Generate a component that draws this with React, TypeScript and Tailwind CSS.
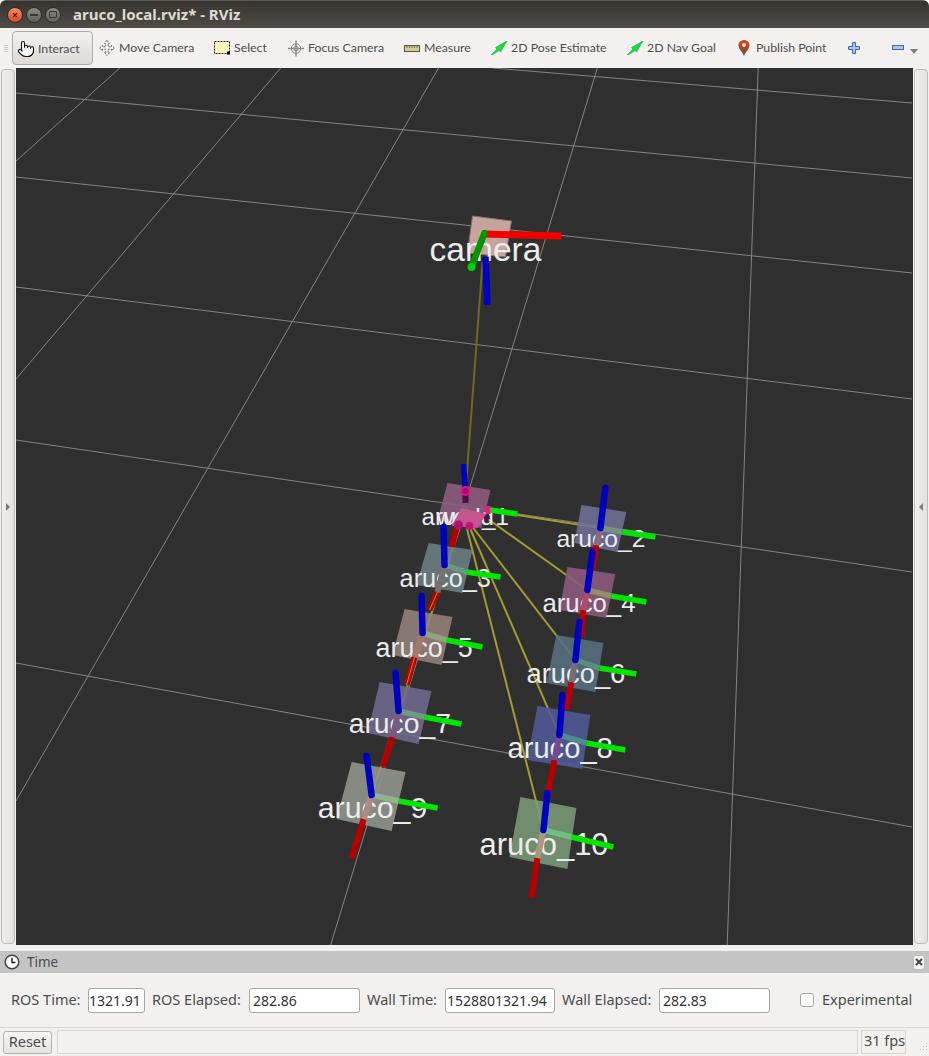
import { Pointer } from 'lucide-react';

const horizontal = [
  [493, 68, 913, 103],
  [16, 93, 913, 178],
  [16, 177, 913, 273],
  [16, 287, 913, 399],
  [16, 440, 913, 572],
  [16, 663, 913, 827],
];

const vertical = [
  [16, 161, 120, 68],
  [16, 379, 281, 68],
  [16, 801, 439, 68],
  [331, 945, 598, 68],
  [728, 945, 759, 68],
];

const links = [
  [483, 262, 466, 492, '#6e6a1e'],
  [518, 515, 601, 528, '#a39c30'],
  [487, 518, 588, 590, '#a39c30'],
  [473, 527, 576, 660, '#a39c30'],
  [470, 527, 560, 735, '#a39c30'],
  [467, 527, 544, 830, '#a39c30'],
  [467, 507, 372, 795, '#a39c30'],
];

interface Marker {
  name: string;
  size: number;
  x: number;
  y: number;
  fill: string;
  points: string;
  blue: number[];
  green: number[];
  red: number[];
  inner: string;
  soft: string;
}

const markers: Marker[] = [
  { name: 'aruco_2', size: 24.7, x: 557, y: 547, fill: '#6f6f97', points: '582,505 627,512 618,552 575,543', blue: [601, 528, 606, 488], green: [601, 528, 623, 532, 656, 537], red: [601, 528, 597, 545, 593, 570], inner: '#8a6a80', soft: '#73927f' },
  { name: 'aruco_4', size: 25.8, x: 543, y: 612, fill: '#8c5a7c', points: '568,567 616,574 607,618 560,610', blue: [588, 590, 593, 552], green: [588, 590, 612, 596, 647, 602], red: [588, 590, 584, 610, 582, 637], inner: '#b04a70', soft: '#8f8f68' },
  { name: 'aruco_3', size: 25.3, x: 400, y: 587, fill: '#6c8085', points: '429,543 473,550 463,593 417,585', blue: [445, 565, 444, 527], green: [445, 565, 467, 572, 501, 577], red: [445, 565, 438, 592, 430, 610], inner: '#7a7070', soft: '#6a9a7c' },
  { name: 'aruco_6', size: 27.4, x: 527, y: 683, fill: '#56707f', points: '557,635 604,643 596,692 547,683', blue: [576, 660, 580, 622], green: [576, 660, 600, 668, 637, 674], red: [576, 660, 572, 682, 567, 710], inner: '#7a6a7a', soft: '#569080' },
  { name: 'aruco_5', size: 26.9, x: 376, y: 657, fill: '#94827a', points: '405,609 453,617 442,665 393,655', blue: [423, 633, 422, 596], green: [423, 633, 447, 640, 483, 647], red: [423, 633, 415, 657, 407, 685], inner: '#a07a6a', soft: '#8fa57a' },
  { name: 'aruco_8', size: 29.2, x: 508, y: 758, fill: '#4e5a95', points: '538,706 591,715 583,769 528,760', blue: [560, 735, 563, 695], green: [560, 735, 587, 743, 626, 750], red: [560, 735, 555, 760, 548, 797], inner: '#7a4a90', soft: '#4e8a90' },
  { name: 'aruco_7', size: 28.4, x: 349, y: 733, fill: '#706a8e', points: '380,682 432,691 419,744 368,733', blue: [399, 711, 396, 673], green: [399, 711, 425, 717, 462, 724], red: [399, 711, 393, 737, 383, 767], inner: '#7c5a80', soft: '#6f9a86' },
  { name: 'aruco_9', size: 30.4, x: 318, y: 818, fill: '#92968d', points: '352,762 406,772 392,831 337,819', blue: [372, 795, 367, 756], green: [372, 795, 399, 801, 438, 808], red: [372, 795, 364, 819, 352, 858], inner: '#ad8a86', soft: '#8fb58f' },
  { name: 'aruco_10', size: 31, x: 480, y: 855, fill: '#7a9a76', points: '521,797 577,808 568,869 510,857', blue: [544, 830, 548, 793], green: [544, 830, 572, 837, 614, 847], red: [544, 830, 538, 858, 532, 898], inner: '#a59a80', soft: '#6fc07c' },
];

const tools = [
  { label: 'Move Camera', box: 'w-[115px]', icon: <MoveIcon /> },
  { label: 'Select', box: 'w-[74px]', icon: <SelectIcon /> },
  { label: 'Focus Camera', box: 'w-[116px]', icon: <FocusIcon /> },
  { label: 'Measure', box: 'w-[87px]', icon: <RulerIcon /> },
  { label: '2D Pose Estimate', box: 'w-[136px]', icon: <ArrowIcon /> },
  { label: '2D Nav Goal', box: 'w-[109px]', icon: <ArrowIcon /> },
  { label: 'Publish Point', box: 'w-[112px]', icon: <PinIcon /> },
];

function MoveIcon() {
  return (
    <svg width="16" height="16" viewBox="0 0 16 16" fill="#fff" stroke="#5a5a5a" strokeWidth="1">
      <path d="M8 .5 10.5 3.5H9.2V6.8H12.5V5.5L15.5 8 12.5 10.5V9.2H9.2V12.5H10.5L8 15.5 5.5 12.5H6.8V9.2H3.5V10.5L.5 8 3.5 5.5V6.8H6.8V3.5H5.5Z" strokeDasharray="2 1" />
    </svg>
  );
}

function SelectIcon() {
  return (
    <svg width="16" height="14" viewBox="0 0 16 14">
      <rect x=".5" y=".5" width="15" height="12" fill="#fdf6b8" stroke="#222" strokeDasharray="2 1" />
      <rect x="13" y="10.500" width="3" height="3" fill="#000" />
    </svg>
  );
}

function FocusIcon() {
  return (
    <svg width="17" height="17" viewBox="0 0 17 17" fill="none" stroke="#8a8a8a">
      <circle cx="8.500" cy="8.500" r="5" fill="#eee" />
      <circle cx="8.500" cy="8.500" r="2.500" />
      <path d="M8.500 0V17M0 8.500H17" strokeWidth="1.500" />
    </svg>
  );
}

function RulerIcon() {
  return (
    <svg width="16" height="7" viewBox="0 0 16 7">
      <rect x=".5" y=".5" width="15" height="6" fill="#d8cc90" stroke="#555" />
      <path d="M3 1V3M5.500 1V3M8 1V3M10.500 1V3M13 1V3" stroke="#555" strokeWidth=".8" />
    </svg>
  );
}

function ArrowIcon() {
  return (
    <svg width="16" height="14" viewBox="0 0 16 14">
      <path d="M0 14 6 8 4.500 6.500 16 0 9.500 11 8 9.500 1 14Z" fill="#14e03c" stroke="#0a9a28" strokeWidth=".5" />
    </svg>
  );
}

function PinIcon() {
  return (
    <svg width="12" height="16" viewBox="0 0 12 16">
      <defs>
        <linearGradient id="pin" x1="0" y1="0" x2="0" y2="1">
          <stop offset="0" stopColor="#d8492a" />
          <stop offset="1" stopColor="#6e4a2c" />
        </linearGradient>
      </defs>
      <path d="M6 0C2.700 0 .5 2.400 .5 5.300 .5 9 4.500 12 6 16 7.500 12 11.500 9 11.500 5.300 11.500 2.400 9.300 0 6 0Z" fill="url(#pin)" />
      <circle cx="6" cy="5" r="2" fill="#f4d8c8" />
    </svg>
  );
}

function Scene() {
  return (
    <svg className="block w-full h-full" viewBox="16 68 898 877" preserveAspectRatio="none">
      {horizontal.concat(vertical).map((l, i) => (
        <line key={i} x1={l[0]} y1={l[1]} x2={l[2]} y2={l[3]} stroke="#858585" strokeWidth="1" />
      ))}

      {/* camera body */}
      <polygon points="473,216 512,221 506,257 468,253" fill="#c5a49c" stroke="#8f7068" strokeWidth="1" />

      {links.map((l, i) => (
        <line key={i} x1={l[0]} y1={l[1]} x2={l[2]} y2={l[3]} stroke={l[4] as string} strokeWidth="2" />
      ))}

      {/* world marker */}
      <polygon points="448,483 491,490 482,528 438,520" fill="#8f5c80" fillOpacity="0.9" />
      {markers.map((m) => (
        <polygon key={m.name} points={m.points} fill={m.fill} fillOpacity="0.88" />
      ))}

      <g fontFamily="'Liberation Sans', Arial, sans-serif" fill="#ececec">
        <text x="430" y="261" fontSize="33.6">camera</text>
        <text x="422" y="525" fontSize="24.2">aruco_1</text>
        <text x="437" y="525" fontSize="24">world</text>
        {markers.map((m) => (
          <text key={m.name} x={m.x} y={m.y} fontSize={m.size}>{m.name}</text>
        ))}
      </g>

      {/* axes sit over the labels */}
      {markers.map((m) => (
        <g key={m.name} fill="none">
          <line x1={m.red[2]} y1={m.red[3]} x2={m.red[4]} y2={m.red[5]} stroke="#b80000" strokeWidth="6" />
          <line x1={m.red[0]} y1={m.red[1]} x2={m.red[2]} y2={m.red[3]} stroke={m.inner} strokeWidth="6" />
          <line x1={m.green[0]} y1={m.green[1]} x2={m.green[2]} y2={m.green[3]} stroke={m.soft} strokeWidth="5.500" />
          <line x1={m.green[2]} y1={m.green[3]} x2={m.green[4]} y2={m.green[5]} stroke="#00e600" strokeWidth="5.500" />
        </g>
      ))}
      <line x1="438" y1="592" x2="430" y2="610" stroke="#a39c30" strokeWidth="1" />
      <line x1="415" y1="657" x2="407" y2="685" stroke="#a39c30" strokeWidth="1" />
      {markers.map((m) => (
        <line key={m.name} x1={m.blue[0]} y1={m.blue[1]} x2={m.blue[2]} y2={m.blue[3]} stroke="#0000c0" strokeWidth="6.500" strokeLinecap="round" />
      ))}

      {/* world axes and the pink link ends */}
      <line x1="458" y1="525" x2="452" y2="547" stroke="#b80000" strokeWidth="6" />
      <line x1="491" y1="510" x2="518" y2="514" stroke="#00e600" strokeWidth="5.500" />
      <line x1="466" y1="492" x2="464" y2="464" stroke="#0000c0" strokeWidth="5.500" />
      <polygon points="462,508 487,514 478,528 452,526" fill="#c5558f" />
      <line x1="466" y1="493" x2="466" y2="503" stroke="#4a1048" strokeWidth="6" />
      <circle cx="466" cy="491" r="4" fill="#a01070" stroke="#e8108a" strokeWidth="2" />
      <rect x="486" y="506" width="5" height="8" fill="#f0188c" />
      <circle cx="487" cy="518" r="2.500" fill="#5a1050" />
      <circle cx="459" cy="525" r="4.500" fill="#b01070" />
      <circle cx="470" cy="526" r="4" fill="#c8107c" />

      {/* camera axes */}
      <line x1="486" y1="257" x2="488" y2="305" stroke="#0000c8" strokeWidth="6.500" />
      <line x1="485" y1="234" x2="562" y2="236" stroke="#f00000" strokeWidth="7" />
      <line x1="485" y1="233" x2="472" y2="267" stroke="#009600" strokeWidth="6.500" strokeLinecap="round" />
      <circle cx="472" cy="267" r="4" fill="#00d000" />
    </svg>
  );
}

function Splitter({ arrow }: { arrow: 'left' | 'right' }) {
  return (
    <div className="w-[14px] mx-[1px] my-[1px] flex items-center justify-center bg-gradient-to-r from-[#f0efed] to-[#e2e1dd] border border-[#bdbbb7] rounded-[4px]">
      <svg width="6" height="8" viewBox="0 0 6 8">
        <path d={arrow === 'right' ? 'M1 0 5 4 1 8Z' : 'M5 0 1 4 5 8Z'} fill="#7a7a7a" />
      </svg>
    </div>
  );
}

function Field({ label, value, labelBox, box, pad, outer }: { label: string; value: string; labelBox: string; box: string; pad: string; outer: string }) {
  return (
    <div className={`flex items-center ${outer}`}>
      <span className={`${labelBox} whitespace-nowrap`}>{label}</span>
      <div className={`${box} ${pad} h-[25px] ml-2 bg-white border border-[#aaa7a3] rounded-[3px] leading-[23px] text-[14px] text-[#333] overflow-hidden whitespace-nowrap`}>
        {value}
      </div>
    </div>
  );
}

export default function App() {
  return (
    <div className="w-[929px] h-[1056px] flex flex-col overflow-hidden bg-[#f2f1f0] text-[14.500px] text-[#4c4c4c] font-['Noto_Sans',sans-serif] rounded-t-[6px]">
      {/* title bar */}
      <div className="h-[28px] shrink-0 flex items-center bg-gradient-to-b from-[#35342f] to-[#504d47] border-t border-[#5c5a54]">
        <div className="ml-[7px] w-4 h-4 rounded-full flex items-center justify-center bg-gradient-to-b from-[#f58a5e] to-[#dd4a1e] border border-[#2f2e2a] text-[#5a1c08] text-[11px] leading-none font-bold">×</div>
        <div className="ml-[3px] w-4 h-4 rounded-full flex items-center justify-center bg-gradient-to-b from-[#8c8981] to-[#64625b] border border-[#2f2e2a]">
          <div className="w-2 h-[2px] bg-[#3a3935]" />
        </div>
        <div className="ml-[3px] w-4 h-4 rounded-full flex items-center justify-center bg-gradient-to-b from-[#8c8981] to-[#64625b] border border-[#2f2e2a]">
          <div className="w-2 h-[7px] border border-[#3a3935] rounded-[1px]" />
        </div>
        <span className="ml-[12px] text-[15px] font-bold text-[#dfdbd2]">aruco_local.rviz* - RViz</span>
      </div>

      {/* toolbar */}
      <div className="h-[40px] shrink-0 flex items-center bg-[#f2f1f0] text-[12.300px] font-['Lato',sans-serif]">
        <div className="w-[12px] pl-[4px] flex flex-col gap-[1px]">
          <div className="w-[4px] h-[1px] bg-[#c8c6c2]" />
          <div className="w-[4px] h-[1px] bg-[#c8c6c2]" />
          <div className="w-[4px] h-[1px] bg-[#c8c6c2]" />
          <div className="w-[4px] h-[1px] bg-[#c8c6c2]" />
        </div>
        <div className="w-[81px] h-[34px] mr-[2px] pl-[4px] pt-[1px] flex items-center gap-[3px] border border-[#aeaba6] rounded-[4px] bg-gradient-to-b from-[#f1f0ee] to-[#dcdad7]">
          <Pointer size={18} strokeWidth={1.5} fill="#fff" color="#111" />
          <span className="pt-[1px]">Interact</span>
        </div>
        {tools.map((t) => (
          <div key={t.label} className={`${t.box} pl-[4px] flex items-center gap-[4px] whitespace-nowrap`}>
            <span className="w-[16px] flex justify-center shrink-0">{t.icon}</span>
            <span className="pt-[1px]">{t.label}</span>
          </div>
        ))}
        <div className="w-[44px] pl-[4px]">
          <svg width="12" height="12" viewBox="0 0 12 12">
            <path d="M4.500 .5H7.500V4.500H11.500V7.500H7.500V11.500H4.500V7.500H.5V4.500H4.500Z" fill="#a8c4e8" stroke="#3a6fb0" />
          </svg>
        </div>
        <div className="pl-[4px] flex items-end gap-[6px]">
          <svg width="12" height="6" viewBox="0 0 12 6">
            <rect x=".5" y=".5" width="11" height="4" fill="#a8c4e8" stroke="#3a6fb0" />
          </svg>
          <svg width="8" height="5" viewBox="0 0 8 5" className="mb-[-3px]">
            <path d="M0 0H8L4 5Z" fill="#7c7c7c" />
          </svg>
        </div>
      </div>

      {/* 3D view with the two dock splitters */}
      <div className="h-[877px] shrink-0 flex">
        <Splitter arrow="right" />
        <div className="w-[898px] bg-[#303030]">
          <Scene />
        </div>
        <Splitter arrow="left" />
      </div>

      {/* time panel */}
      <div className="mt-[6px] h-[22px] shrink-0 flex items-center justify-between pl-[4px] pr-[4px] bg-[#c4c4c4]">
        <div className="flex items-center gap-[7px]">
          <svg width="16" height="16" viewBox="0 0 16 16">
            <circle cx="8" cy="8" r="6.800" fill="#fff" stroke="#444" strokeWidth="1.500" />
            <path d="M8 3.800V8.500H11.500" fill="none" stroke="#222" strokeWidth="1.500" />
          </svg>
          <span className="text-[13.500px] pt-[1px]">Time</span>
        </div>
        <div className="w-[12px] h-[15px] flex items-center justify-center bg-[#f4f4f3] border border-[#bbb] rounded-[3px]">
          <svg width="8" height="8" viewBox="0 0 8 8">
            <path d="M1 1 7 7M7 1 1 7" stroke="#444" strokeWidth="2" />
          </svg>
        </div>
      </div>
      <div className="h-[54px] shrink-0 flex items-center pl-[11px]">
        <Field label="ROS Time:" value="1321.91" labelBox="w-[69px]" box="w-[57px]" pad="pl-0" outer="w-[141px]" />
        <Field label="ROS Elapsed:" value="282.86" labelBox="w-[89px]" box="w-[111px]" pad="pl-[3px]" outer="w-[215px]" />
        <Field label="Wall Time:" value="1528801321.94" labelBox="w-[70px]" box="w-[110px]" pad="pl-[1px]" outer="w-[195px]" />
        <Field label="Wall Elapsed:" value="282.83" labelBox="w-[89px]" box="w-[111px]" pad="pl-[3px]" outer="w-[238px]" />
        <div className="w-[14px] h-[14px] bg-white border border-[#a9a6a2] rounded-[3px]" />
        <span className="ml-[8px]">Experimental</span>
      </div>

      {/* status bar */}
      <div className="h-[29px] shrink-0 flex items-center pl-[3px] border-t border-[#d8d6d3]">
        <div className="w-[49px] h-[23px] flex items-center justify-center border border-[#b5b2ad] rounded-[3px] bg-gradient-to-b from-[#f6f5f4] to-[#e6e4e1]">Reset</div>
        <div className="w-[801px] h-[24px] ml-[5px] border border-[#d8d6d3]" />
        <div className="w-[45px] h-[24px] ml-[3px] pl-[2px] border border-[#d8d6d3] leading-[19px] whitespace-nowrap overflow-hidden">31 fps</div>
        <svg width="12" height="12" viewBox="0 0 12 12" className="ml-[11px] mt-[12px]" fill="#c4c2be">
          <rect x="9" y="1" width="1" height="1" />
          <rect x="6" y="4" width="1" height="1" />
          <rect x="9" y="4" width="1" height="1" />
          <rect x="3" y="7" width="1" height="1" />
          <rect x="6" y="7" width="1" height="1" />
          <rect x="9" y="7" width="1" height="1" />
        </svg>
      </div>
    </div>
  );
}
